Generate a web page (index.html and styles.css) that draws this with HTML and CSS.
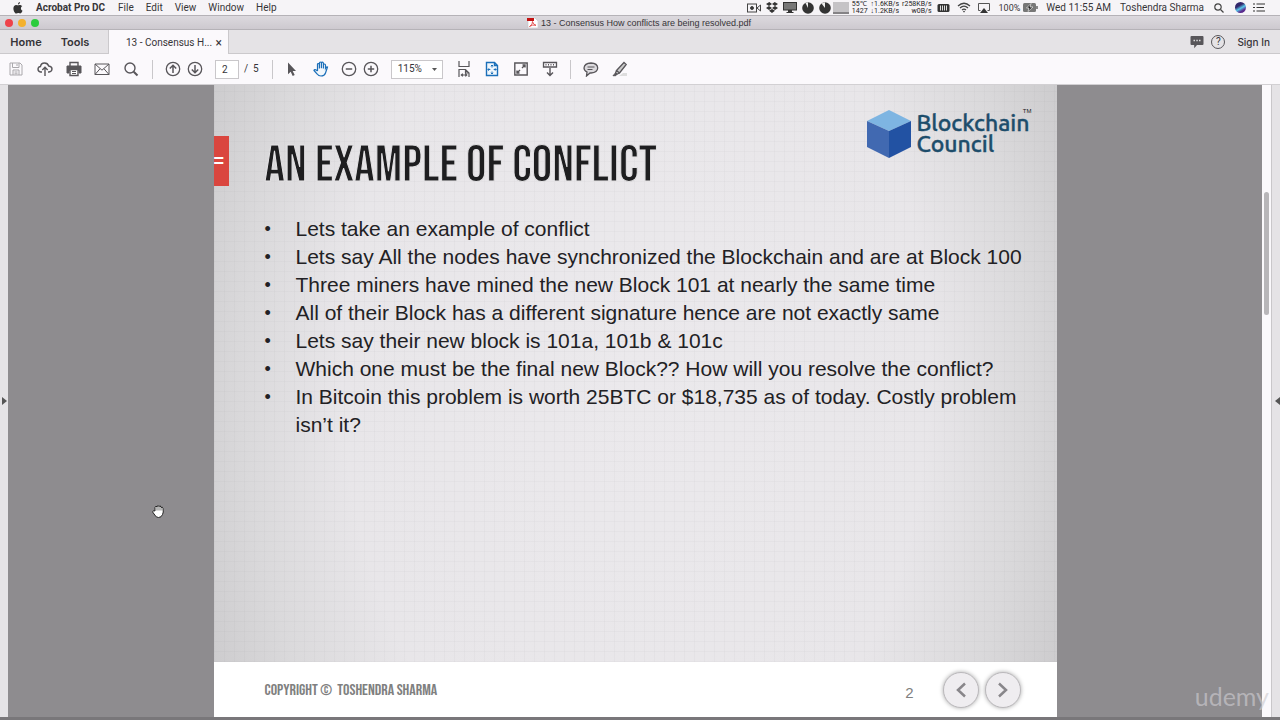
FILE: index.html
```html
<!DOCTYPE html>
<html lang="en">
<head>
<meta charset="utf-8">
<title>13 - Consensus How conflicts are being resolved.pdf</title>
<link rel="stylesheet" href="styles.css">
</head>
<body>
<header class="menubar">
  <nav class="menus" aria-label="Application menu">
    <button aria-label="Apple"><svg width="10" height="12" viewBox="0 0 10 12"><path d="M6.9 0C5.700.2 4.800 1.400 5 2.600 6.100 2.500 7 1.300 6.900 0ZM9.300 4C8.400 3.400 7.300 2.800 6.500 2.900 5.900 3 5.500 3.300 5 3.300 4.400 3.300 3.900 2.900 3.200 2.900 1.600 2.900.4 4.200.4 6.400.4 8.800 2 11.500 3.300 11.500 4 11.500 4.400 11.100 5.200 11.100 6 11.100 6.300 11.500 7 11.500 8 11.500 9 10 9.500 8.700 7.400 7.900 7.500 5 9.300 4Z" fill="#333"/></svg></button>
    <button class="app">Acrobat Pro DC</button>
    <button>File</button>
    <button>Edit</button>
    <button>View</button>
    <button>Window</button>
    <button>Help</button>
  </nav>
  <div class="tray">
    <svg width="14" height="10" viewBox="0 0 14 10" fill="none" stroke="#444"><rect x=".5" y="1" width="9" height="8"/><path d="M10 5l3.500-3v6z"/><circle cx="5" cy="5" r="1.500" fill="#333"/></svg>
    <svg class="dropbox" width="12" height="11" viewBox="0 0 12 11" fill="#333"><path d="M3.300 0L6 2 3 4 0 2zM8.700 0L12 2 9 4 6 2zM0 6l3-2 3 2-3 2zM6 6l3-2 3 2-3 2zM3 8.800L6 7l3 1.800L6 11z"/></svg>
    <svg width="14" height="11" viewBox="0 0 14 11"><rect x=".5" y=".5" width="13" height="7.500" fill="#777" stroke="#333"/><path d="M5 8h4v2h1.500v1h-7v-1H5z" fill="#333"/></svg>
    <svg width="12" height="12" viewBox="0 0 12 12"><circle cx="6" cy="6" r="5.800" fill="#333"/><path d="M6 6V.2L3.500 1z" fill="#eee"/></svg>
    <svg width="12" height="12" viewBox="0 0 12 12"><circle cx="6" cy="6" r="5.800" fill="#333"/><path d="M6 6V.2L2.500 1.500z" fill="#eee"/></svg>
    <span class="graph"></span>
    <span class="stat temp">55℃<br>1427</span>
    <span class="stat net">↑1.6KB/s<br>↓1.2KB/s</span>
    <span class="stat disk">r258KB/s<br>w0B/s</span>
    <svg width="13" height="10" viewBox="0 0 13 10"><rect x=".5" y="1" width="12" height="8" rx="1.500" fill="#333"/><path d="M3.500 2.500v5M5.500 2.500v5M7.500 2.500v5M9.500 2.500v5" stroke="#ddd"/></svg>
    <svg class="wifi" width="14" height="11" viewBox="0 0 14 11" fill="none" stroke="#444" stroke-width="1.300"><path d="M1 4Q7-1.500 13 4M3 6Q7 2.300 11 6M5 8Q7 6.300 9 8"/><circle cx="7" cy="9.600" r=".8" fill="#333" stroke="none"/></svg>
    <svg class="airplay" width="12" height="10" viewBox="0 0 12 10"><path d="M2.500 7.500H.5v-7h11v7h-2" fill="none" stroke="#555"/><path d="M6 5l4 5H2z" fill="#333"/></svg>
    <span class="percent">100%</span>
    <svg width="15" height="9" viewBox="0 0 15 9"><rect width="13" height="9" rx="1.500" fill="#777"/><path d="M14 3v3" stroke="#666" stroke-width="1.500"/><path d="M8 .5L3.500 5H6L5 8.500 10 4H7z" fill="#222" stroke="#eee" stroke-width=".7"/></svg>
    <span class="clock">Wed 11:55 AM</span>
    <span class="user">Toshendra Sharma</span>
    <svg class="spot" width="10" height="10" viewBox="0 0 10 10" fill="none" stroke="#444" stroke-width="1.200"><circle cx="4" cy="4" r="3.200"/><path d="M6.500 6.500L9.500 9.500"/></svg>
    <span class="siri"></span>
    <svg width="13" height="9" viewBox="0 0 13 9" stroke="#333" stroke-width="1.200"><path d="M0 1h2M3.500 1H12M0 4.500h2M3.500 4.500H11M0 8h2M3.500 8H12"/></svg>
  </div>
</header>

<div class="titlebar">
  <div class="lights"><button class="red" aria-label="Close"></button><button class="yellow" aria-label="Minimise"></button><button class="green" aria-label="Zoom"></button></div>
  <div class="doc-title"><svg width="11" height="10" viewBox="0 0 11 10"><path d="M1 0h7l3 3v7H1z" fill="#fff" stroke="#bbb" stroke-width=".5"/><path d="M0 0h7v3H0z" fill="#c41212"/><path d="M2.500 8.500Q6 6.500 5.500 3.500 6 6.500 9 7.300 5.500 6.300 2.500 8.500Z" fill="none" stroke="#d33" stroke-width=".8"/></svg><span>13 - Consensus How conflicts are being resolved.pdf</span></div>
</div>

<div class="tabs">
  <button class="home">Home</button>
  <button class="tools">Tools</button>
  <div class="tab"><span>13 - Consensus H...</span><button aria-label="Close tab">×</button></div>
  <div class="account">
    <svg width="14" height="14" viewBox="0 0 14 14"><path d="M1.500 1h11q1 0 1 1v7q0 1-1 1H7l-2.800 3.200V10H1.500q-1 0-1-1V2q0-1 1-1z" fill="#58565a"/><path d="M3.500 5.500h1.500M6.300 5.500h1.500M9 5.500h1.500" stroke="#ddd" stroke-width="1.300"/></svg>
    <button class="help" aria-label="Help">?</button>
    <button class="signin">Sign In</button>
  </div>
</div>

<div class="toolbar">
  <div class="group file-tools">
    <button aria-label="Save"><svg viewBox="0 0 16 16" stroke="#aaa8ac"><path d="M2 2h10l2 2v10H2zM4.500 2v4.500h6.500V2M5 14V9h6v5M6.500 11h3M6.500 12.800h3M9 3v2"/></svg></button>
    <button aria-label="Share"><svg viewBox="0 0 16 16"><path d="M5 11H3.500Q1 10.500 1 8 1.200 5.800 3.500 5.500 4 2 7.500 2 10.700 2 11.700 5 15 5.500 15 8 14.800 10.700 12 11h-1M8 15V6.500M5.300 9L8 6.300 10.700 9" stroke-width="1.400"/></svg></button>
    <button aria-label="Print"><svg viewBox="0 0 16 16"><path d="M4 5V1.500h8V5" stroke-width="1.400"/><path d="M1 5h14v7h-2V9.500H3V12H1z" fill="#58565a"/><path d="M4 8.500h8v6H4z" fill="#fff" stroke-width="1.400"/><path d="M6 10.500h4M6 12.500h4"/></svg></button>
    <button aria-label="Email"><svg viewBox="0 0 16 16"><path d="M1 3h14v10.500H1zM1 3l7 6.200L15 3M1 13.500l5-5.700M15 13.500l-5-5.700"/></svg></button>
    <button aria-label="Find"><svg viewBox="0 0 16 16"><circle cx="7" cy="7" r="5" stroke-width="1.400"/><path d="M10.700 10.700L14.500 14.500" stroke-width="2"/></svg></button>
  </div>
  <span class="sep"></span>
  <div class="group pair">
    <button aria-label="Previous page"><svg viewBox="0 0 16 16"><circle cx="8" cy="8" r="6.700" stroke-width="1.300"/><path d="M8 12V4.500M4.800 7.500L8 4.300l3.200 3.200" stroke-width="1.500"/></svg></button>
    <button aria-label="Next page"><svg viewBox="0 0 16 16"><circle cx="8" cy="8" r="6.700" stroke-width="1.300"/><path d="M8 4v7.500M4.800 8.500L8 11.700l3.200-3.200" stroke-width="1.500"/></svg></button>
  </div>
  <div class="pages"><input type="text" value="2" aria-label="Page number"><span>/&nbsp; 5</span></div>
  <span class="sep"></span>
  <div class="group select-tools">
    <button aria-label="Select"><svg viewBox="0 0 16 16"><path d="M4 1.500v11.700l2.700-2.500 2 4.300 2-1-2-4H12z" fill="#58565a" stroke="none"/></svg></button>
    <button aria-label="Pan"><svg viewBox="0 0 16 16" stroke="#1b6fb9"><path d="M4.500 10V3.500Q4.500 2.500 5.400 2.500 6.300 2.500 6.400 3.500V7.500M6.400 7V2Q6.500 1 7.400 1 8.300 1 8.400 2V7.200M8.400 7V2Q8.500 1.200 9.400 1.200 10.300 1.200 10.400 2.200V7.500M10.400 7V4Q10.600 3 11.500 3 12.500 3 12.500 4.200V7.300Q13.500 5.500 14.500 6L12.500 12Q11.500 15 8 15 5.500 15 4.200 13L1 9.500Q1.500 7.500 4.500 10" stroke-width="1.200" fill="#f1f7fc"/></svg></button>
  </div>
  <div class="group pair zoomers">
    <button aria-label="Zoom out"><svg viewBox="0 0 16 16"><circle cx="8" cy="8" r="6.700" stroke-width="1.300"/><path d="M4.800 8h6.400" stroke-width="1.500"/></svg></button>
    <button aria-label="Zoom in"><svg viewBox="0 0 16 16"><circle cx="8" cy="8" r="6.700" stroke-width="1.300"/><path d="M4.800 8h6.400M8 4.800v6.400" stroke-width="1.500"/></svg></button>
  </div>
  <select class="zoom" aria-label="Zoom level"><option>115%</option></select>
  <div class="group view-tools">
    <button aria-label="Scroll pages"><svg viewBox="0 0 16 16"><path d="M3 0v5.500h10V0M3 16V8.500h6.500L13 12v4M9.500 8.500V12H13M5.500 14h5M6.800 12.600L5.300 14l1.500 1.400M9.300 12.600l1.500 1.400-1.500 1.400" stroke-width="1.200"/></svg></button>
    <button aria-label="Fit page"><svg viewBox="0 0 16 16" stroke="#1b6fb9"><path d="M2.500 1.500h8l3 3v10h-11zM10.500 1.500v3h3" stroke-width="1.400" fill="#f1f7fc"/><path d="M8 4v2.500M6.800 5.200L8 4l1.200 1.200M8 13v-2.500M6.800 11.800L8 13l1.200-1.200M3.800 8.500h2.500M5 7.300L3.800 8.500 5 9.700M12.200 8.500H9.700M11 7.300l1.200 1.200L11 9.700"/></svg></button>
    <button aria-label="Full screen"><svg viewBox="0 0 16 16"><path d="M1.800 2h12.400v12H1.800z" stroke-width="1.400"/><path d="M9 7L12 4M9.500 4H12v2.500M7 9L4 12M4 9.500V12h2.500" stroke-width="1.400"/></svg></button>
    <button aria-label="Read mode"><svg viewBox="0 0 16 16"><path d="M1.500 1.500h13V6h-13z" stroke-width="1.300"/><path d="M3.500 3.800h1M6 3.800h1M8.500 3.800h1M11 3.800h1" stroke-width="1.400"/><path d="M8 7v7M5 11.500l3 3 3-3" stroke-width="1.400"/></svg></button>
  </div>
  <span class="sep"></span>
  <div class="group select-tools">
    <button aria-label="Comment"><svg viewBox="0 0 16 16"><path d="M8 2Q14.500 2.200 14.700 7 14.500 11.500 8 12H7L3.500 15 4 11Q1 9.500 1 7 1.500 2.200 8 2z" fill="#dcdade" stroke-width="1.300"/><path d="M4.500 6h7M4.500 8.500h5"/></svg></button>
    <button aria-label="Highlight"><svg viewBox="0 0 16 16"><path d="M7 15h8v-3h-4z" fill="#ddd" stroke="none"/><path d="M4.500 9.500L12 1.500l2.200 2L7.500 12zM4.500 9.500L3.500 12l1.300 1.300 2.700-1.300" fill="#ccc" stroke-width="1.300"/><path d="M3.500 12L1 14.700h2.800l1-1.400z" fill="#58565a"/></svg></button>
  </div>
</div>

<div class="workspace">
  <button class="side left" aria-label="Open navigation pane"><svg width="5" height="8" viewBox="0 0 5 8"><path d="M0 0l5 4-5 4z" fill="#555"/></svg></button>
  <main class="viewer">
    <article class="slide">
      <div class="paper">
        <span class="marker">=</span>
        <header class="slide-head">
          <h1>AN EXAMPLE OF CONFLICT</h1>
          <div class="brand">
            <svg width="44" height="48" viewBox="0 0 44 48"><path d="M22 0l22 11-22 10L0 11z" fill="#7eb5e2"/><path d="M0 11l22 10v27L0 37z" fill="#4169b1"/><path d="M44 11L22 21v27l22-11z" fill="#2252a3"/></svg>
            <p>Blockchain<br>Council</p><sup>TM</sup>
          </div>
        </header>
        <ul>
          <li>Lets take an example of conflict</li>
          <li>Lets say All the nodes have synchronized the Blockchain and are at Block 100</li>
          <li>Three miners have mined the new Block 101 at nearly the same time</li>
          <li>All of their Block has a different signature hence are not exactly same</li>
          <li>Lets say their new block is 101a, 101b &amp; 101c</li>
          <li>Which one must be the final new Block?? How will you resolve the conflict?</li>
          <li>In Bitcoin this problem is worth 25BTC or $18,735 as of today. Costly problem isn’t it?</li>
        </ul>
      </div>
      <footer>
        <span class="copyright">COPYRIGHT ©&nbsp; TOSHENDRA SHARMA</span>
        <span class="number">2</span>
        <button aria-label="Previous slide"><svg width="12" height="16" viewBox="0 0 12 16"><path d="M10 1.500L3 8l7 6.500" fill="none" stroke="#88868a" stroke-width="2.500"/></svg></button>
        <button aria-label="Next slide"><svg width="12" height="16" viewBox="0 0 12 16"><path d="M2 1.500L9 8l-7 6.500" fill="none" stroke="#88868a" stroke-width="2.500"/></svg></button>
      </footer>
    </article>
    <svg class="hand" width="12" height="13" viewBox="0 0 12 13"><path d="M3 6V2.500Q4-.2 5 2 5.500-.8 7 1.500 8.500-.3 9 2.500 10.500 1.300 11 3.500 11.800 7.500 10.500 9.500 9.500 12.500 6.500 12.500 4 12.500 2.800 10L.6 7Q1 4.800 3 6Z" fill="#fff" stroke="#222"/><path d="M5 2v3.500M7 2v3.500M9 2.800V5.500" stroke="#444" stroke-width=".8"/></svg>
  </main>
  <div class="scroll"><span></span></div>
  <button class="side right" aria-label="Open tools pane"><svg width="5" height="8" viewBox="0 0 5 8"><path d="M5 0L0 4l5 4z" fill="#555"/></svg></button>
  <span class="watermark">udemy</span>
</div>
</body>
</html>
```
FILE: styles.css
```css
* { box-sizing: border-box; }
body {
  margin: 0;
  height: 100vh;
  display: flex;
  flex-direction: column;
  overflow: hidden;
  background: #8e8c8f;
  color: #363438;
  font: 10px/14px Roboto, "Liberation Sans", sans-serif;
}
button, input, select { font: inherit; color: inherit; }
button { padding: 0; border: 0; background: none; }
svg { display: block; flex: none; }

.menubar {
  height: 15px;
  flex: none;
  display: flex;
  justify-content: space-between;
  background: #f6f4f7;
  white-space: nowrap;
}
.menus { display: flex; gap: 12px; padding-left: 13px; align-items: center; }
.menus .app { font-weight: 700; margin: 0 1px; }
.tray { display: flex; align-items: center; padding-right: 14px; gap: 5px; }
.graph { width: 16px; height: 12px; margin: 0 -2px 0 -3px; background: #c5c3c6; border-bottom: 2px solid #858386; }
.stat { font: 7px/7px Roboto, sans-serif; color: #222; }
.net, .disk { text-align: right; }
.net, .disk { margin-left: -2px; }
.wifi, .airplay { margin-left: 2px; }
.airplay { margin-right: 4px; }
.clock { margin-left: 3px; }
.percent { margin-right: -2px; font-size: 9px; }
.user { margin: 0 5px 0 4px; }
.siri {
  width: 11px;
  height: 11px;
  margin: 0 2px 0 6px;
  border-radius: 50%;
  background: linear-gradient(150deg, #33276b 35%, #57c7ea 55%, #5a2a8d 75%);
}

.titlebar {
  height: 15px;
  flex: none;
  display: flex;
  align-items: center;
  border-top: 1px solid #b5b2b7;
  border-bottom: 1px solid #b5b2b7;
  background: linear-gradient(#dcd9de, #cdc9cf);
}
.lights { display: flex; gap: 5px; padding-left: 5px; flex: 1; }
.lights button { width: 8px; height: 8px; border-radius: 50%; }
.lights .red { background: #ee424a; }
.lights .yellow { background: #f4b12d; }
.lights .green { background: #2ccc3d; }
.doc-title { display: flex; align-items: center; gap: 3px; padding-right: 7px; font: 9px/12px "Liberation Sans", Arial, sans-serif; }
.titlebar::after { content: ""; flex: 1; }

.tabs { height: 24px; flex: none; display: flex; background: #e5e3e6; }
.tabs > * { border-bottom: 1px solid #cbc9cc; }
.tabs .home, .tabs .tools { font: 600 11px/14px Inter, sans-serif; }
.tabs .home { width: 52px; }
.tabs .tools { width: 56px; padding-right: 10px; }
.tab {
  width: 121px;
  display: flex;
  align-items: center;
  justify-content: space-between;
  padding: 1px 6px 0 17px;
  background: #fbf9fc;
  border: 1px solid #cbc9cc;
  border-width: 0 1px;
  white-space: nowrap;
}
.tab button { font-size: 12px; }
.tabs .tab { border-bottom: 0; }
.account { flex: 1; display: flex; align-items: center; justify-content: flex-end; gap: 7px; padding-right: 10px; }
.help { width: 14px; height: 14px; border: 1px solid #58565a; border-radius: 50%; line-height: 12px; }
.signin { font: 500 10px/14px Inter, sans-serif; margin-left: 5px; }

.toolbar {
  height: 31px;
  flex: none;
  display: flex;
  align-items: center;
  padding-left: 8px;
  background: #fbf9fc;
  border-bottom: 1px solid #d2d0d3;
}
.group { display: flex; justify-content: space-between; }
.group svg { width: 16px; height: 16px; fill: none; }
.group svg:not([stroke]) { stroke: #58565a; }
.file-tools { width: 131px; }
.pair { width: 38px; }
.select-tools { width: 45px; }
.view-tools { width: 102px; margin-left: 13px; }
.zoomers { margin: 0 12px; }
.sep { width: 1px; height: 19px; margin: 0 12px; background: #c9c7ca; }
.file-tools + .sep { margin-left: 13px; }
.pages { display: flex; align-items: center; gap: 5px; margin-left: 12px; }
.pages input { width: 24px; height: 19px; border: 1px solid #c9c7ca; background: #fff; padding: 0 6px; }
.pages + .sep { margin: 0 11px 0 13px; }
.zoom {
  width: 52px;
  height: 19px;
  padding: 0 6px;
  border: 1px solid #c9c7ca;
  border-radius: 0;
  appearance: none;
  background: #fff url("data:image/svg+xml,%3Csvg xmlns='http://www.w3.org/2000/svg' width='5' height='3'%3E%3Cpath d='M0 0h5L2.500 3z' fill='%23555'/%3E%3C/svg%3E") no-repeat right 5px center;
}

.workspace { flex: 1; min-height: 0; display: flex; position: relative; border-bottom: 3px solid #79777a; }
.side { width: 8px; flex: none; display: flex; align-items: center; justify-content: center; background: #e5e3e6; }
.right { width: 9px; border-left: 1px solid #c9c7ca; justify-content: flex-end; }
.viewer { flex: 1; display: flex; justify-content: center; position: relative; background: #8e8c8f; }
.scroll { width: 9px; padding-top: 107px; background: #fbf9fc; display: flex; justify-content: center; }
.scroll span { width: 5px; height: 123px; border-radius: 3px; background: #b8b6b9; }

.slide { width: 100%; max-width: 843px; display: flex; flex-direction: column; }
.paper {
  flex: 1;
  position: relative;
  padding: 23px 27px 0 51px;
  background:
    repeating-linear-gradient(90deg, rgba(110,110,115,.04) 0 1px, transparent 1px 10px),
    repeating-linear-gradient(0deg, rgba(110,110,115,.04) 0 1px, transparent 1px 10px),
    radial-gradient(ellipse 58% 130% at 50% 50%, #ebe9ec 0%, #e8e6e9 60%, #dad9db 80%, #c8c7c9 100%);
}
.marker {
  position: absolute;
  left: 0;
  top: 51px;
  width: 15px;
  height: 50px;
  background: #da463f;
  color: #fff;
  font: 700 18px/50px "Liberation Sans", sans-serif;
}
.slide-head { display: flex; justify-content: space-between; height: 107px; }
h1 {
  margin: 0;
  padding-top: 28px;
  color: #1e1e20;
  font: 400 51px/60px "Bebas Neue", "Liberation Sans Narrow", sans-serif;
  -webkit-text-stroke: 1px #e4e3e5;
  white-space: nowrap;
}
.brand { display: flex; gap: 5px; position: relative; padding-top: 2px; color: #1d4d6b; }
.brand p { margin: 2px 0 0; font: 500 23px/21px Ubuntu, "Noto Sans", sans-serif; -webkit-text-stroke: .4px currentColor; }
.brand sup { position: absolute; right: -2px; top: 0; color: #222; font: 6px/6px "Liberation Sans", sans-serif; }
ul { margin: 0; padding: 0 0 0 31px; font: 21px/28px "Liberation Sans", Arial, sans-serif; color: #222124; list-style: none; }
li { position: relative; }
li::before { content: "•"; position: absolute; left: -31px; font-size: 18px; }
footer { flex: none; height: 55px; display: flex; align-items: center; padding: 0 36px 0 51px; background: #fff; color: #808080; }
.copyright { flex: 1; padding-top: 3px; font: 16px/20px "Bebas Neue", "Liberation Sans Narrow", sans-serif; }
.number { margin-right: 29px; padding-top: 6px; font: 15px/20px "Liberation Sans", sans-serif; }
footer button { width: 36px; height: 36px; display: grid; place-items: center; border: 1px solid #bbb9bc; border-radius: 50%; background: #efedf0; box-shadow: 0 0 4px #aaa; }
footer button + button { margin-left: 6px; }
.hand { position: absolute; left: 144px; top: 420px; }
.watermark { position: absolute; right: 11px; bottom: 6px; color: rgba(205,203,207,.65); font: 25px/30px Lato, sans-serif; }
```
